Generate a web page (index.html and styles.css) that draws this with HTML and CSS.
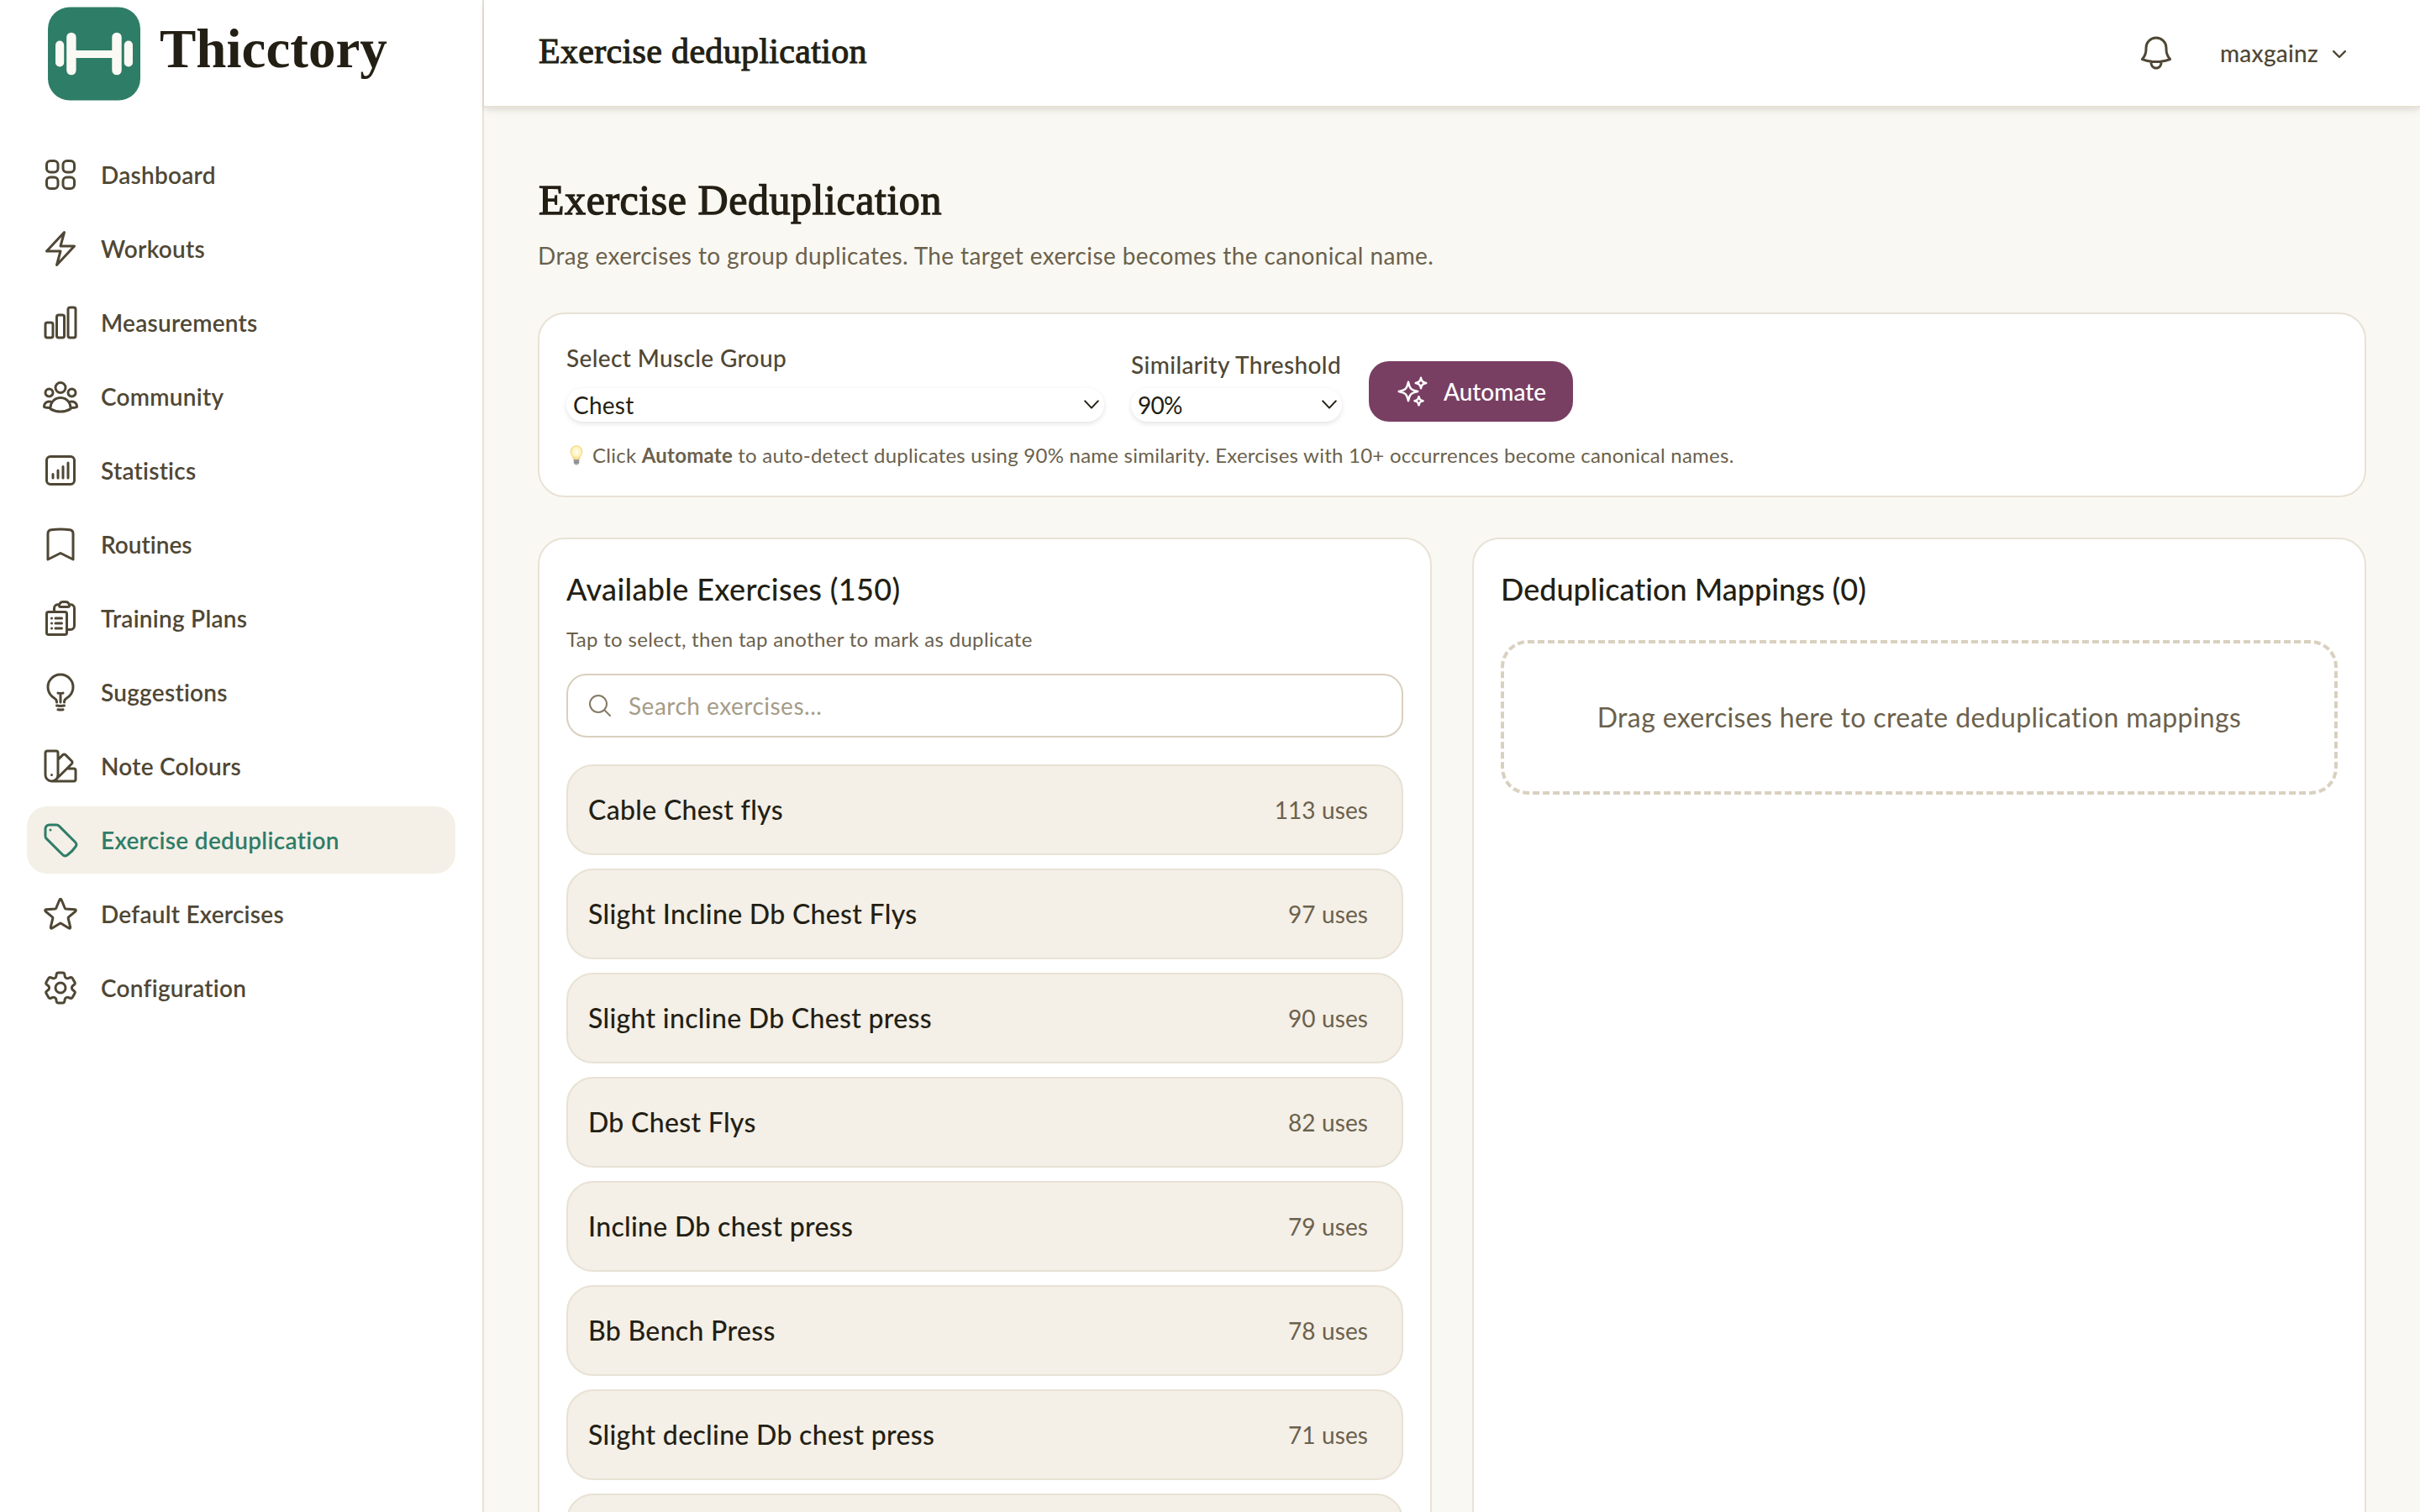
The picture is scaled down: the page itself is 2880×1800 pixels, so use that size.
FILE: index.html
```html
<!DOCTYPE html>
<html lang="en">
<head>
<meta charset="utf-8">
<title>Exercise deduplication · Thicctory</title>
<link rel="stylesheet" href="styles.css">
</head>
<body>
<div class="app">
  <aside class="sidebar">
    <div class="brand">
      <svg class="brand-mark" viewBox="0 0 112 112">
        <rect x="1" y="0.5" width="110" height="111" rx="26" fill="#2e7d67"/>
        <g fill="#fbf9f4">
          <rect x="10" y="40.5" width="10.2" height="31" rx="5.1"/>
          <rect x="23.2" y="30.7" width="11.4" height="50.6" rx="5.7"/>
          <rect x="33" y="52" width="46" height="9"/>
          <rect x="77.3" y="30.7" width="11.4" height="50.6" rx="5.7"/>
          <rect x="91.8" y="40.5" width="10.2" height="31" rx="5.1"/>
        </g>
      </svg>
      <span class="brand-name">Thicctory</span>
    </div>
    <nav class="nav">
      <a class="nav-item"><svg class="icon" viewBox="0 0 24 24"><path d="M3.75 6A2.25 2.25 0 0 1 6 3.75h2.25A2.25 2.25 0 0 1 10.5 6v2.25a2.25 2.25 0 0 1-2.25 2.25H6a2.25 2.25 0 0 1-2.25-2.25V6ZM3.75 15.75A2.25 2.25 0 0 1 6 13.5h2.25a2.25 2.25 0 0 1 2.25 2.25V18a2.25 2.25 0 0 1-2.25 2.25H6A2.25 2.25 0 0 1 3.75 18v-2.25ZM13.5 6a2.25 2.25 0 0 1 2.25-2.25H18A2.25 2.25 0 0 1 20.25 6v2.25A2.25 2.25 0 0 1 18 10.5h-2.25a2.25 2.25 0 0 1-2.25-2.25V6ZM13.5 15.75a2.25 2.25 0 0 1 2.25-2.25H18a2.25 2.25 0 0 1 2.25 2.25V18A2.25 2.25 0 0 1 18 20.25h-2.25A2.25 2.25 0 0 1 13.5 18v-2.25Z"/></svg><span>Dashboard</span></a>
      <a class="nav-item"><svg class="icon" viewBox="0 0 24 24"><path d="m3.75 13.5 10.5-11.25L12 10.5h8.25L9.75 21.75 12 13.5H3.75Z"/></svg><span>Workouts</span></a>
      <a class="nav-item"><svg class="icon" viewBox="0 0 24 24"><path d="M3 13.125C3 12.504 3.504 12 4.125 12h2.25c.621 0 1.125.504 1.125 1.125v6.75C7.5 20.496 6.996 21 6.375 21h-2.25A1.125 1.125 0 0 1 3 19.875v-6.75ZM9.75 8.625c0-.621.504-1.125 1.125-1.125h2.25c.621 0 1.125.504 1.125 1.125v11.25c0 .621-.504 1.125-1.125 1.125h-2.25a1.125 1.125 0 0 1-1.125-1.125V8.625ZM16.5 4.125c0-.621.504-1.125 1.125-1.125h2.25C20.496 3 21 3.504 21 4.125v15.75c0 .621-.504 1.125-1.125 1.125h-2.25a1.125 1.125 0 0 1-1.125-1.125V4.125Z"/></svg><span>Measurements</span></a>
      <a class="nav-item"><svg class="icon" viewBox="0 0 24 24"><path d="M18 18.72a9.094 9.094 0 0 0 3.741-.479 3 3 0 0 0-4.682-2.72m.94 3.198.001.031c0 .225-.012.447-.037.666A11.944 11.944 0 0 1 12 21c-2.17 0-4.207-.576-5.963-1.584A6.062 6.062 0 0 1 6 18.719m12 0a5.971 5.971 0 0 0-.941-3.197m0 0A5.995 5.995 0 0 0 12 12.75a5.995 5.995 0 0 0-5.058 2.772m0 0a3 3 0 0 0-4.681 2.72 8.986 8.986 0 0 0 3.74.477m.94-3.197a5.971 5.971 0 0 0-.94 3.197M15 6.75a3 3 0 1 1-6 0 3 3 0 0 1 6 0Zm6 3a2.25 2.25 0 1 1-4.5 0 2.25 2.25 0 0 1 4.5 0Zm-13.5 0a2.25 2.25 0 1 1-4.5 0 2.25 2.25 0 0 1 4.5 0Z"/></svg><span>Community</span></a>
      <a class="nav-item"><svg class="icon" viewBox="0 0 24 24"><path d="M7.5 14.25v2.25m3-4.5v4.5m3-6.75v6.75m3-9v9M6 20.25h12A2.25 2.25 0 0 0 20.25 18V6A2.25 2.25 0 0 0 18 3.75H6A2.25 2.25 0 0 0 3.75 6v12A2.25 2.25 0 0 0 6 20.25Z"/></svg><span>Statistics</span></a>
      <a class="nav-item"><svg class="icon" viewBox="0 0 24 24"><path d="M17.593 3.322c1.1.128 1.907 1.077 1.907 2.185V21L12 17.25 4.5 21V5.507c0-1.108.806-2.057 1.907-2.185a48.507 48.507 0 0 1 11.186 0Z"/></svg><span class="tight">Routines</span></a>
      <a class="nav-item"><svg class="icon" viewBox="0 0 24 24"><path d="M9 12h3.75M9 15h3.75M9 18h3.75m3 .75H18a2.25 2.25 0 0 0 2.25-2.25V6.108c0-1.135-.845-2.098-1.976-2.192a48.424 48.424 0 0 0-1.123-.08m-5.801 0c-.065.21-.1.433-.1.664 0 .414.336.75.75.75h4.5a.75.75 0 0 0 .75-.75 2.25 2.25 0 0 0-.1-.664m-5.8 0A2.251 2.251 0 0 1 13.5 2.25H15c1.012 0 1.867.668 2.15 1.586m-5.8 0c-.376.023-.75.05-1.124.08C9.095 4.01 8.25 4.973 8.25 6.108V8.25m0 0H4.875c-.621 0-1.125.504-1.125 1.125v11.25c0 .621.504 1.125 1.125 1.125h9.75c.621 0 1.125-.504 1.125-1.125V9.375c0-.621-.504-1.125-1.125-1.125H8.25ZM6.75 12h.008v.008H6.75V12Zm0 3h.008v.008H6.75V15Zm0 3h.008v.008H6.75V18Z"/></svg><span>Training Plans</span></a>
      <a class="nav-item"><svg class="icon" viewBox="0 0 24 24"><path d="M12 18v-5.25m0 0a6.01 6.01 0 0 0 1.5-.189m-1.5.189a6.01 6.01 0 0 1-1.5-.189m3.75 7.478a12.06 12.06 0 0 1-4.5 0m3.75 2.383a14.406 14.406 0 0 1-3 0M14.25 18v-.192c0-.983.658-1.823 1.508-2.316a7.5 7.5 0 1 0-7.517 0c.85.493 1.509 1.333 1.509 2.316V18"/></svg><span>Suggestions</span></a>
      <a class="nav-item"><svg class="icon" viewBox="0 0 24 24"><path d="M4.098 19.902a3.75 3.75 0 0 0 5.304 0l6.401-6.402M6.75 21A3.75 3.75 0 0 1 3 17.25V4.125C3 3.504 3.504 3 4.125 3h5.25c.621 0 1.125.504 1.125 1.125v4.072M6.75 21a3.75 3.75 0 0 0 3.75-3.75V8.197M6.75 21h13.125c.621 0 1.125-.504 1.125-1.125v-5.25c0-.621-.504-1.125-1.125-1.125h-4.072M10.5 8.197l2.88-2.88c.438-.439 1.15-.439 1.59 0l3.712 3.713c.44.44.44 1.152 0 1.59l-2.879 2.88M6.75 17.25h.008v.008H6.75v-.008Z"/></svg><span>Note Colours</span></a>
      <a class="nav-item active"><svg class="icon" viewBox="0 0 24 24"><path d="M9.568 3H5.25A2.25 2.25 0 0 0 3 5.25v4.318c0 .597.237 1.17.659 1.591l9.581 9.581c.699.699 1.78.872 2.607.33a18.095 18.095 0 0 0 5.223-5.223c.542-.827.369-1.908-.33-2.607L11.16 3.66A2.25 2.25 0 0 0 9.568 3Z"/><path d="M6 6h.008v.008H6V6Z"/></svg><span>Exercise deduplication</span></a>
      <a class="nav-item"><svg class="icon" viewBox="0 0 24 24"><path d="M11.48 3.499a.562.562 0 0 1 1.04 0l2.125 5.111a.563.563 0 0 0 .475.345l5.518.442c.499.04.701.663.321.988l-4.204 3.602a.563.563 0 0 0-.182.557l1.285 5.385a.562.562 0 0 1-.84.61l-4.725-2.885a.562.562 0 0 0-.586 0L6.982 20.54a.562.562 0 0 1-.84-.61l1.285-5.386a.562.562 0 0 0-.182-.557l-4.204-3.602a.562.562 0 0 1 .321-.988l5.518-.442a.563.563 0 0 0 .475-.345L11.48 3.5Z"/></svg><span>Default Exercises</span></a>
      <a class="nav-item"><svg class="icon" viewBox="0 0 24 24"><path d="M9.594 3.94c.09-.542.56-.94 1.11-.94h2.593c.55 0 1.02.398 1.11.94l.213 1.281c.063.374.313.686.645.87.074.04.147.083.22.127.325.196.72.257 1.075.124l1.217-.456a1.125 1.125 0 0 1 1.37.49l1.296 2.247a1.125 1.125 0 0 1-.26 1.431l-1.003.827c-.293.241-.438.613-.43.992a7.723 7.723 0 0 1 0 .255c-.008.378.137.75.43.991l1.004.827c.424.35.534.955.26 1.43l-1.298 2.247a1.125 1.125 0 0 1-1.369.491l-1.217-.456c-.355-.133-.75-.072-1.076.124a6.47 6.47 0 0 1-.22.128c-.331.183-.581.495-.644.869l-.213 1.281c-.09.543-.56.94-1.11.94h-2.594c-.55 0-1.019-.398-1.11-.94l-.213-1.281c-.062-.374-.312-.686-.644-.87a6.52 6.52 0 0 1-.22-.127c-.325-.196-.72-.257-1.076-.124l-1.217.456a1.125 1.125 0 0 1-1.369-.49l-1.297-2.247a1.125 1.125 0 0 1 .26-1.431l1.004-.827c.292-.24.437-.613.43-.991a6.932 6.932 0 0 1 0-.255c.007-.38-.138-.751-.43-.992l-1.004-.827a1.125 1.125 0 0 1-.26-1.43l1.297-2.247a1.125 1.125 0 0 1 1.37-.491l1.216.456c.356.133.751.072 1.076-.124.072-.044.146-.086.22-.128.332-.183.582-.495.644-.869l.214-1.28Z"/><path d="M15 12a3 3 0 1 1-6 0 3 3 0 0 1 6 0Z"/></svg><span>Configuration</span></a>
    </nav>
  </aside>

  <div class="content">
    <header class="topbar">
      <div class="topbar-title">Exercise deduplication</div>
      <div class="topbar-actions">
        <svg class="icon" viewBox="0 0 24 24"><path d="M14.857 17.082a23.848 23.848 0 0 0 5.454-1.31A8.967 8.967 0 0 1 18 9.75V9A6 6 0 0 0 6 9v.75a8.967 8.967 0 0 1-2.312 6.022c1.733.64 3.56 1.085 5.455 1.31m5.714 0a24.255 24.255 0 0 1-5.714 0m5.714 0a3 3 0 1 1-5.714 0"/></svg>
        <div class="user">
          <span>maxgainz</span>
          <svg class="user-chevron" viewBox="0 0 16 10"><path d="m1.2 1.2 6.8 6.8 6.8-6.8"/></svg>
        </div>
      </div>
    </header>

    <main class="main">
      <h1 class="page-title">Exercise Deduplication</h1>
      <p class="page-sub">Drag exercises to group duplicates. The target exercise becomes the canonical name.</p>

      <section class="card controls">
        <div class="controls-row">
          <div class="field field-group">
            <label class="field-label">Select Muscle Group</label>
            <div class="select"><span>Chest</span><svg class="select-chevron" viewBox="0 0 18 12"><path d="m1.2 1.4 7.8 8.2 7.8-8.2"/></svg></div>
          </div>
          <div class="field field-threshold">
            <label class="field-label">Similarity Threshold</label>
            <div class="select"><span class="percent">90%</span><svg class="select-chevron" viewBox="0 0 18 12"><path d="m1.2 1.4 7.8 8.2 7.8-8.2"/></svg></div>
          </div>
          <button class="automate">
            <svg class="automate-icon" viewBox="0 0 24 24"><path d="M9.813 15.904 9 18.75l-.813-2.846a4.5 4.5 0 0 0-3.09-3.09L2.25 12l2.846-.813a4.5 4.5 0 0 0 3.09-3.09L9 5.25l.813 2.846a4.5 4.5 0 0 0 3.09 3.09L15.75 12l-2.846.813a4.5 4.5 0 0 0-3.09 3.09ZM18.259 8.715 18 9.75l-.259-1.035a3.375 3.375 0 0 0-2.455-2.456L14.25 6l1.036-.259a3.375 3.375 0 0 0 2.455-2.456L18 2.25l.259 1.035a3.375 3.375 0 0 0 2.456 2.456L21.75 6l-1.035.259a3.375 3.375 0 0 0-2.456 2.456ZM16.894 20.567 16.5 21.75l-.394-1.183a2.25 2.25 0 0 0-1.423-1.423L13.5 18.75l1.183-.394a2.25 2.25 0 0 0 1.423-1.423l.394-1.183.394 1.183a2.25 2.25 0 0 0 1.423 1.423l1.183.394-1.183.394a2.25 2.25 0 0 0-1.423 1.423Z"/></svg>
            <span>Automate</span>
          </button>
        </div>
        <p class="hint">
          <svg class="bulb" viewBox="0 0 24 24">
            <defs><radialGradient id="glow" cx=".5" cy=".45" r=".6"><stop offset="0" stop-color="#fffef4"/><stop offset=".55" stop-color="#fff3bf"/><stop offset="1" stop-color="#f3cf62"/></radialGradient></defs>
            <path d="M12 .5c4.200 0 7 3.100 7 7.200 0 3.300-2.700 5.300-3.400 9.300H8.400C7.700 13 5 11 5 7.700 5 3.600 7.800.5 12 .5Z" fill="url(#glow)" stroke="#ecd487" stroke-width=".6"/>
            <path d="M8.800 17h6.400v3.600c0 1.700-1.200 2.900-3.200 2.900s-3.200-1.200-3.200-2.900Z" fill="#a5a5a8"/>
            <path d="M8.800 18.700h6.400M8.800 20.600h6.400" stroke="#6f6f73" stroke-width=".6"/>
          </svg>
          <span>Click <strong>Automate</strong> to auto-detect duplicates using 90% name similarity. Exercises with 10+ occurrences become canonical names.</span>
        </p>
      </section>

      <div class="columns">
        <section class="card panel">
          <h2 class="panel-title spaced">Available Exercises (150)</h2>
          <p class="panel-sub">Tap to select, then tap another to mark as duplicate</p>
          <div class="search">
            <svg class="search-icon" viewBox="0 0 24 24"><path d="m21 21-5.197-5.197m0 0A7.500 7.500 0 1 0 5.196 5.196a7.500 7.500 0 0 0 10.607 10.607Z"/></svg>
            <span>Search exercises...</span>
          </div>
          <ul class="list">
            <li class="row"><span class="row-name">Cable Chest flys</span><span class="row-uses">113 uses</span></li>
            <li class="row"><span class="row-name">Slight Incline Db Chest Flys</span><span class="row-uses">97 uses</span></li>
            <li class="row"><span class="row-name">Slight incline Db Chest press</span><span class="row-uses">90 uses</span></li>
            <li class="row"><span class="row-name">Db Chest Flys</span><span class="row-uses">82 uses</span></li>
            <li class="row"><span class="row-name">Incline Db chest press</span><span class="row-uses">79 uses</span></li>
            <li class="row"><span class="row-name">Bb Bench Press</span><span class="row-uses">78 uses</span></li>
            <li class="row"><span class="row-name">Slight decline Db chest press</span><span class="row-uses">71 uses</span></li>
            <li class="row"></li>
          </ul>
        </section>
        <section class="card panel">
          <h2 class="panel-title">Deduplication Mappings (0)</h2>
          <div class="dropzone">Drag exercises here to create deduplication mappings</div>
        </section>
      </div>
    </main>
  </div>
</div>
</body>
</html>
```
FILE: styles.css
```css
:root {
  --ink: #231f14;
  --ink-soft: #4f4735;
  --muted: #6b614c;
  --faint: #a59c88;
  --line: #e8e2d5;
  --line-strong: #d9d0bf;
  --sand: #f4efe7;
  --paper: #faf8f3;
  --green: #2e7d67;
  --plum: #783f62;
}

* { box-sizing: border-box; margin: 0; padding: 0; }

body {
  background: var(--paper);
  color: var(--ink);
  font-family: Lato, "Liberation Sans", sans-serif;
  font-size: 28px;
  line-height: 40px;
  letter-spacing: .25px;
  font-variant-ligatures: none;
  overflow: hidden;
}

.app { display: flex; height: 1800px; overflow: hidden; }

.icon {
  width: 48px;
  height: 48px;
  flex: none;
  fill: none;
  stroke: currentColor;
  stroke-width: 1.5;
  stroke-linecap: round;
  stroke-linejoin: round;
}

/* Sidebar */
.sidebar {
  width: 576px;
  flex: none;
  background: #fff;
  border-right: 2px solid var(--line);
}

.brand {
  display: flex;
  align-items: center;
  gap: 22px;
  height: 128px;
  padding-left: 56px;
}

.brand-mark { width: 112px; height: 112px; flex: none; }

.brand-name {
  padding-bottom: 12px;
  font-family: "Liberation Serif", serif;
  font-weight: 700;
  font-size: 65px;
  line-height: 72px;
  letter-spacing: 0;
}

.nav {
  display: flex;
  flex-direction: column;
  gap: 8px;
  padding: 40px 32px 0;
}

.nav-item {
  display: flex;
  align-items: center;
  gap: 24px;
  height: 80px;
  padding: 0 16px;
  border-radius: 24px;
  color: var(--ink-soft);
  font-weight: 600;
  white-space: nowrap;
}

.nav-item .tight { letter-spacing: 0; }
.nav-item.active { background: var(--sand); color: var(--green); letter-spacing: .32px; }

/* Top bar */
.content { flex: 1; min-width: 0; }

.topbar {
  display: flex;
  align-items: center;
  justify-content: space-between;
  height: 128px;
  padding: 0 80px 0 65px;
  background: #fff;
  border-bottom: 2px solid var(--line);
  box-shadow: 0 2px 6px rgba(35, 31, 20, .1), 0 8px 12px -4px rgba(35, 31, 20, .05);
}

.topbar-title {
  padding-bottom: 5px;
  font-family: "Liberation Serif", serif;
  font-size: 42px;
  line-height: 56px;
  letter-spacing: .33px;
  -webkit-text-stroke: 1.1px currentColor;
}

.topbar-actions { display: flex; align-items: center; gap: 52px; color: var(--ink-soft); }
.user { display: flex; align-items: center; gap: 17px; font-weight: 500; }
.user-chevron { width: 16px; height: 10px; margin: 3px 8px 0 0; fill: none; stroke: currentColor; stroke-width: 2.4; stroke-linecap: round; stroke-linejoin: round; }

/* Page */
.main { padding: 80px 64px 0; }

.page-title {
  padding-left: 1px;
  font-family: "Liberation Serif", serif;
  font-weight: 400;
  font-size: 50px;
  line-height: 60px;
  letter-spacing: .55px;
  -webkit-text-stroke: 1.3px currentColor;
}

.page-sub { margin: 16px 0 48px; color: var(--muted); letter-spacing: .38px; }

.card {
  background: #fff;
  border: 2px solid var(--line);
  border-radius: 32px;
  padding: 32px;
}

.controls-row { display: flex; align-items: flex-end; gap: 32px; }
.field { display: flex; flex-direction: column; }
.field-group { width: 640px; gap: 16px; }
.field-threshold { width: 251px; gap: 8px; }
.field-label { color: var(--ink-soft); font-weight: 500; letter-spacing: .37px; white-space: nowrap; }

.select {
  display: flex;
  align-items: center;
  justify-content: space-between;
  height: 40px;
  padding: 0 6px 0 8px;
  border-radius: 20px;
  background: #fff;
  box-shadow: 0 2px 6px rgba(0, 0, 0, .09), 0 4px 8px -2px rgba(0, 0, 0, .04);
}

.select .percent { letter-spacing: -.8px; }
.select-chevron { width: 18px; height: 12px; fill: none; stroke: var(--ink); stroke-width: 2; stroke-linecap: round; stroke-linejoin: round; }

.automate {
  display: flex;
  align-items: center;
  justify-content: center;
  gap: 17px;
  width: 243px;
  height: 72px;
  border: 0;
  border-radius: 24px;
  background: var(--plum);
  color: #fff;
  font: 500 28px/40px Lato, "Liberation Sans", sans-serif;
}

.automate-icon { width: 40px; height: 40px; fill: none; stroke: currentColor; stroke-width: 1.5; stroke-linecap: round; stroke-linejoin: round; }

.hint { display: flex; align-items: center; gap: 7px; margin-top: 24px; color: var(--muted); font-size: 24px; line-height: 32px; letter-spacing: .24px; }
.hint strong { font-weight: 700; }
.bulb { width: 24px; height: 24px; flex: none; }

.columns { display: grid; grid-template-columns: 1fr 1fr; gap: 48px; margin-top: 48px; }
.panel { min-height: 1240px; }
.panel-title { font-weight: 500; font-size: 36px; line-height: 54px; letter-spacing: 0; }
.panel-title.spaced { letter-spacing: .35px; }
.panel-sub { margin: 17px 0 25px; color: var(--muted); font-size: 24px; line-height: 32px; letter-spacing: .32px; }

.search {
  display: flex;
  align-items: center;
  gap: 18px;
  height: 76px;
  padding: 0 22px;
  border: 2px solid var(--line-strong);
  border-radius: 24px;
  color: var(--faint);
  letter-spacing: .5px;
}

.search-icon { width: 32px; height: 32px; fill: none; stroke: #857b66; stroke-width: 1.5; stroke-linecap: round; }

.list { display: flex; flex-direction: column; gap: 16px; margin-top: 32px; list-style: none; }

.row {
  display: flex;
  align-items: center;
  justify-content: space-between;
  height: 108px;
  padding: 0 40px 0 24px;
  border: 2px solid var(--line);
  border-radius: 32px;
  background: var(--sand);
}

.row-name { font-weight: 500; font-size: 32px; letter-spacing: .32px; }
.row-uses { color: var(--muted); letter-spacing: .1px; }

.dropzone {
  display: flex;
  align-items: center;
  justify-content: center;
  height: 184px;
  margin-top: 34px;
  border: 4px dashed var(--line-strong);
  border-radius: 32px;
  color: var(--muted);
  font-size: 32px;
  letter-spacing: .36px;
}
```
